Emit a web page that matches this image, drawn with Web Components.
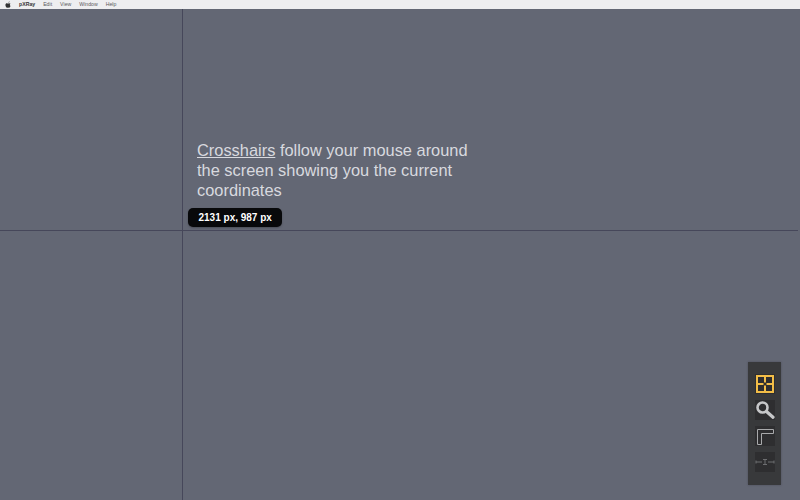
<!DOCTYPE html>
<html>
<head>
<meta charset="utf-8">
<title>pXRay</title>
<style>
  html, body { margin: 0; height: 100%; overflow: hidden; }
  body { font-family: "Liberation Sans", Arial, sans-serif; }
</style>
</head>
<body>
<pxray-desktop>
  <pxray-menubar slot="menubar">
    <span class="brand">pXRay</span>
    <span>Edit</span>
    <span>View</span>
    <span>Window</span>
    <span>Help</span>
  </pxray-menubar>
  <pxray-crosshair x="182" y="221"></pxray-crosshair>
  <pxray-hint coords="2131 px, 987 px">
    <span><u>Crosshairs</u> follow your mouse around</span>
    <span>the screen showing you the current</span>
    <span>coordinates</span>
  </pxray-hint>
  <pxray-toolbar slot="toolbar"></pxray-toolbar>
</pxray-desktop>

<script>
const desktopTemplate = Object.assign(document.createElement('template'), {
  innerHTML: `
    <style>
      :host {
        display: flex;
        flex-direction: column;
        width: 800px;
        height: 500px;
        background: #636774;
      }
      .canvas {
        position: relative;
        flex: 1;
        display: flex;
        justify-content: space-between;
        align-items: flex-end;
        padding: 0 19px 15px 188px;
      }
      .main { align-self: flex-start; }
    </style>
    <slot name="menubar"></slot>
    <div class="canvas">
      <div class="main"><slot></slot></div>
      <slot name="toolbar"></slot>
    </div>
  `,
});

class PxrayDesktop extends HTMLElement {
  constructor() {
    super();
    this.attachShadow({ mode: 'open' });
    this.shadowRoot.appendChild(desktopTemplate.content.cloneNode(true));
  }
}

const menubarTemplate = Object.assign(document.createElement('template'), {
  innerHTML: `
    <style>
      :host {
        display: flex;
        align-items: center;
        gap: 8px;
        height: 9px;
        padding-left: 5px;
        background: #eeeef0;
        color: #5a5a5e;
        font: 5.200px/9px "Liberation Sans", Arial, sans-serif;
        flex: none;
        overflow: hidden;
      }
      svg { width: 6px; height: 7px; fill: #333; }
      ::slotted(.brand) { font-weight: bold; color: #333; }
    </style>
    <svg viewBox="0 0 14 16"><path d="M10.5 1c.1 1.300-1 2.800-2.500 2.800C7.900 2.400 9.200 1.100 10.500 1zM13 11.600c-.7 1.700-2 3.900-3.300 3.900-1 0-1.300-.6-2.500-.6s-1.600.6-2.500.6C3 15.500 1 12 1 9.200 1 6.600 2.700 5 4.400 5c1.100 0 2 .7 2.700.7S8.700 5 10 5c.9 0 2.100.4 2.900 1.500-2.300 1.300-1.900 4.300.1 5.100z"/></svg>
    <slot></slot>
  `,
});

class PxrayMenubar extends HTMLElement {
  constructor() {
    super();
    this.attachShadow({ mode: 'open' });
    this.shadowRoot.appendChild(menubarTemplate.content.cloneNode(true));
  }
}

const crosshairTemplate = Object.assign(document.createElement('template'), {
  innerHTML: `
    <style>
      :host { display: contents; }
      .v, .h { position: absolute; background: #46475a; }
      .v { top: 0; bottom: 0; width: 1px; }
      .h { left: 0; right: 2px; height: 1px; }
    </style>
    <div class="v"></div>
    <div class="h"></div>
  `,
});

class PxrayCrosshair extends HTMLElement {
  constructor() {
    super();
    this.attachShadow({ mode: 'open' });
    this.shadowRoot.appendChild(crosshairTemplate.content.cloneNode(true));
  }

  connectedCallback() {
    this.shadowRoot.querySelector('.v').style.left = this.getAttribute('x') + 'px';
    this.shadowRoot.querySelector('.h').style.top = this.getAttribute('y') + 'px';
  }
}

const hintTemplate = Object.assign(document.createElement('template'), {
  innerHTML: `
    <style>
      :host {
        display: flex;
        flex-direction: column;
        align-items: flex-start;
        padding-top: 131px;
      }
      .text {
        margin-left: 9px;
        color: #d8d9df;
        font: 16.400px/20px "Liberation Sans", Arial, sans-serif;
      }
      ::slotted(span) { display: block; white-space: nowrap; }
      .coords {
        margin-top: 8px;
        padding: 0 10.500px;
        height: 19px;
        background: #08090b;
        border-radius: 5px;
        color: #fff;
        font: bold 10px/19px "Liberation Sans", Arial, sans-serif;
        white-space: nowrap;
        box-shadow: 0 1px 2px rgba(0, 0, 0, .25);
      }
    </style>
    <div class="text"><slot></slot></div>
    <div class="coords"></div>
  `,
});

class PxrayHint extends HTMLElement {
  constructor() {
    super();
    this.attachShadow({ mode: 'open' });
    this.shadowRoot.appendChild(hintTemplate.content.cloneNode(true));
  }

  connectedCallback() {
    this.shadowRoot.querySelector('.coords').textContent = this.getAttribute('coords');
  }
}

const toolbarTemplate = Object.assign(document.createElement('template'), {
  innerHTML: `
    <style>
      :host {
        display: flex;
        flex-direction: column;
        align-items: center;
        gap: 6px;
        width: 33px;
        height: 123px;
        box-sizing: border-box;
        padding-top: 12px;
        background: #38393b;
        box-shadow: 0 0 2px rgba(40, 40, 50, .4);
      }
      .tool {
        display: block;
        width: 20px;
        height: 20px;
        background: #2e2e30;
      }
      svg { display: block; width: 20px; height: 20px; }
    </style>
    <span class="tool">
      <svg viewBox="0 0 20 20" fill="none" stroke="#f2bd47" stroke-width="2">
        <rect x="2" y="2" width="16" height="16"/>
        <path d="M10 2v6.500M10 11.500v6.500M2 10h6.500M11.500 10h6.500"/>
      </svg>
    </span>
    <span class="tool">
      <svg viewBox="0 0 20 20" fill="none" stroke="#c6c7c9">
        <circle cx="7.500" cy="7.500" r="5" stroke-width="2.600"/>
        <path d="M11.500 11.500l6.500 5.800" stroke-width="3.200" stroke-linecap="round"/>
      </svg>
    </span>
    <span class="tool">
      <svg viewBox="0 0 20 20" fill="none" stroke="#a9aaac" stroke-width="1">
        <path d="M2.500 18.500V3.500H18.500V7.500H6.500V18.500z"/>
      </svg>
    </span>
    <span class="tool">
      <svg viewBox="0 0 20 20" fill="none" stroke="#6d6e70" stroke-width="1">
        <path d="M1 8.500v3M1 10h6M19 8.500v3M13 10h6M8 7.500h4M8 12.500h4M10 7.500v5"/>
      </svg>
    </span>
  `,
});

class PxrayToolbar extends HTMLElement {
  constructor() {
    super();
    this.attachShadow({ mode: 'open' });
    this.shadowRoot.appendChild(toolbarTemplate.content.cloneNode(true));
  }
}

window.customElements.define('pxray-desktop', PxrayDesktop);
window.customElements.define('pxray-menubar', PxrayMenubar);
window.customElements.define('pxray-crosshair', PxrayCrosshair);
window.customElements.define('pxray-hint', PxrayHint);
window.customElements.define('pxray-toolbar', PxrayToolbar);
</script>
</body>
</html>
